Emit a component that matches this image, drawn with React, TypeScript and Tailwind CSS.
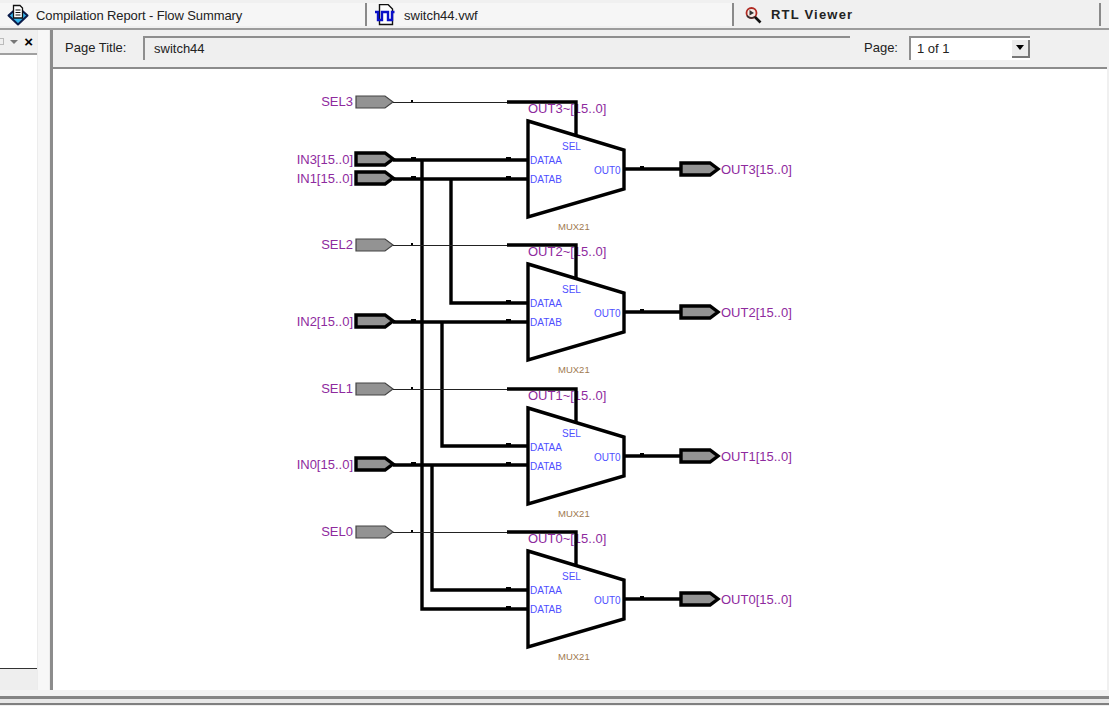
const muxOffsets = [
  { dy: 0, sel: 'SEL3', selLabel: 'OUT3~[15..0]', out: 'OUT3[15..0]' },
  { dy: 143, sel: 'SEL2', selLabel: 'OUT2~[15..0]', out: 'OUT2[15..0]' },
  { dy: 287, sel: 'SEL1', selLabel: 'OUT1~[15..0]', out: 'OUT1[15..0]' },
  { dy: 430, sel: 'SEL0', selLabel: 'OUT0~[15..0]', out: 'OUT0[15..0]' },
]

const busInputs = [
  { y: 160, name: 'IN3[15..0]' },
  { y: 179, name: 'IN1[15..0]' },
  { y: 322, name: 'IN2[15..0]' },
  { y: 465, name: 'IN0[15..0]' },
]

// vertical tap + the horizontal run into the mux below
const taps = [
  { x: 422, y1: 160, y2: 609 },
  { x: 451, y1: 179, y2: 303 },
  { x: 442, y1: 322, y2: 446 },
  { x: 432, y1: 465, y2: 590 },
]

const purple = '#8e2a9e'
const blue = '#4f4fff'

function Pin({ x, y, thick }: { x: number; y: number; thick?: boolean }) {
  const points = `${x},${y - 6} ${x + 29},${y - 6} ${x + 37},${y} ${x + 29},${y + 6} ${x},${y + 6}`
  return <polygon points={points} fill="#939393" stroke={thick ? '#000' : '#444'} strokeWidth={thick ? 3.4 : 1.2} />
}

function Mux({ dy, sel, selLabel, out }: (typeof muxOffsets)[number]) {
  const selY = 102 + dy
  const outY = 169 + dy
  return (
    <g>
      <text x={353} y={selY + 4} textAnchor="end" fontSize={13} fill={purple}>{sel}</text>
      <Pin x={356} y={selY} />
      <line x1={393} y1={selY + 0.5} x2={507} y2={selY + 0.5} stroke="#222" strokeWidth={1} />
      <rect x={411} y={selY - 2} width={2} height={2} fill="#000" />
      <text x={528} y={113 + dy} fontSize={13} fill={purple}>{selLabel}</text>
      <path d={`M507 ${selY}H576V${137 + dy}`} fill="none" stroke="#000" strokeWidth={3.4} />

      <polygon
        points={`528,${121 + dy} 624,${150 + dy} 624,${189 + dy} 528,${217 + dy}`}
        fill="#fff"
        stroke="#000"
        strokeWidth={3.4}
      />
      <text x={562} y={150 + dy} fontSize={10} fill={blue}>SEL</text>
      <text x={530} y={164 + dy} fontSize={10} fill={blue}>DATAA</text>
      <text x={530} y={183 + dy} fontSize={10} fill={blue}>DATAB</text>
      <text x={594} y={174 + dy} fontSize={10} fill={blue}>OUT0</text>
      <text x={558} y={230 + dy} fontSize={9.500} fill="#a07a50">MUX21</text>

      <line x1={624} y1={outY} x2={681} y2={outY} stroke="#000" strokeWidth={3.4} />
      <rect x={640} y={outY - 3} width={4} height={2} fill="#000" />
      <Pin x={681} y={outY} thick />
      <text x={721} y={outY + 5} fontSize={13} fill={purple}>{out}</text>
    </g>
  )
}

function Diagram() {
  return (
    <svg
      width={1054}
      height={622}
      viewBox="53 69 1054 622"
      className="block"
      style={{ fontFamily: '"Liberation Sans", Arial, sans-serif' }}
    >
      {busInputs.map(b => (
        <g key={b.name}>
          <line x1={393} y1={b.y} x2={528} y2={b.y} stroke="#000" strokeWidth={3.4} />
          <rect x={411} y={b.y - 3} width={5} height={2} fill="#000" />
          <rect x={506} y={b.y - 3} width={5} height={2} fill="#000" />
        </g>
      ))}
      {taps.map(t => (
        <g key={t.x}>
          <path d={`M${t.x} ${t.y1}V${t.y2}H528`} fill="none" stroke="#000" strokeWidth={3.4} />
          <rect x={506} y={t.y2 - 3} width={5} height={2} fill="#000" />
        </g>
      ))}
      {busInputs.map(b => (
        <g key={b.name}>
          <text x={353} y={b.y + 4} textAnchor="end" fontSize={13} fill={purple}>{b.name}</text>
          <Pin x={356} y={b.y - 1} thick />
        </g>
      ))}
      {muxOffsets.map(m => (
        <Mux key={m.sel} {...m} />
      ))}
    </svg>
  )
}

function ReportIcon() {
  return (
    <svg width={22} height={22} viewBox="0 0 22 22" className="shrink-0">
      <path d="M11 3L20.500 11.500L11 20.500L1.500 11.500Z" fill="#35b6ee" stroke="#0b1c4a" strokeWidth={2} strokeLinejoin="round" />
      <path d="M6.500 1.500H13L15.500 4V14H6.500Z" fill="#fff" stroke="#111" strokeWidth={1.300} />
      <path d="M8.500 6H13.500M8.500 8.500H13.500M8.500 11H13.500" stroke="#111" strokeWidth={1.200} />
    </svg>
  )
}

function WaveIcon() {
  return (
    <svg width={22} height={22} viewBox="0 0 22 22" className="shrink-0">
      <path d="M5.500 0.500H14L18.500 5V20.500H5.500Z" fill="#fff" stroke="#111" strokeWidth={1.400} />
      <path d="M1 8H4V16H8V8H14V16H18V8H20.500" fill="none" stroke="#0a10c8" strokeWidth={2.400} />
    </svg>
  )
}

function RtlIcon() {
  return (
    <svg width={18} height={18} viewBox="0 0 18 18" className="shrink-0">
      <circle cx={7.500} cy={7} r={5} fill="#f4ece8" stroke="#b02a22" strokeWidth={1.800} />
      <path d="M3 9.500A5 5 0 0 0 11 10.500" fill="none" stroke="#333" strokeWidth={1.600} />
      <path d="M5.500 4L10 7L5.500 9.500Z" fill="#333" />
      <path d="M11 11L16.500 16.500" stroke="#111" strokeWidth={2.600} />
    </svg>
  )
}

export default function App() {
  return (
    <div className="flex h-[706px] w-[1109px] flex-col overflow-hidden bg-[#f0f0f0] text-[#222] font-['Liberation_Sans',Arial,sans-serif]">
      {/* document tabs */}
      <div className="flex h-[30px] border-b-2 border-[#9c9c9c] pt-[3px] pb-[2px]">
        <div className="flex w-[367px] items-center gap-[7px] border-r-2 border-[#8a8a8a] bg-[#f6f6f6] pl-[7px]">
          <ReportIcon />
          <span className="relative top-[1px] text-[13px] tracking-[-0.1px]">Compilation Report - Flow Summary</span>
        </div>
        <div className="flex w-[367px] items-center gap-[8px] border-r-2 border-[#8a8a8a] bg-[#f6f6f6] pl-[7px]">
          <WaveIcon />
          <span className="relative top-[1px] text-[13px]">switch44.vwf</span>
        </div>
        <div className="flex w-[367px] items-center gap-[9px] border-r-2 border-[#8a8a8a] pl-[10px]">
          <RtlIcon />
          <span className="text-[13px] font-bold tracking-[1.2px]">RTL Viewer</span>
        </div>
      </div>

      <div className="flex min-h-0 flex-1">
        {/* project navigator stub */}
        <div className="flex w-[37px] flex-col">
          <div className="flex h-[23px] items-center justify-end gap-[6px] pr-1">
            <span className="h-[7px] w-[4px] border-y border-r border-[#bbb]" />
            <span className="h-0 w-0 border-x-[4px] border-t-[4px] border-x-transparent border-t-[#777]" />
            <span className="text-[15px] leading-none font-bold text-black">×</span>
          </div>
          <div className="flex-1 border-t-2 border-[#a0a0a0] bg-white" />
          <div className="h-[22px] border-t border-[#333] bg-[#eeeeee]" />
        </div>
        <div className="w-[13px] border-x border-[#ececec] bg-[#f7f7f7]" />

        <div className="flex min-w-0 flex-1 flex-col border-l-[3px] border-[#8c8c8c] pr-[2px]">
          <div className="flex h-[37px] items-center pr-[77px] pb-[2px] pl-[12px] text-[13px]">
            <span className="w-[78px]">Page Title:</span>
            <div className="flex h-[24px] w-[707px] items-center border-t-2 border-l-2 border-[#8e8e8e] bg-[#efefef] pl-[9px]">switch44</div>
            <span className="ml-[14px] w-[45px]">Page:</span>
            <div className="flex h-[24px] w-[121px] shrink-0 items-center justify-between border-t-2 border-l-2 border-[#8e8e8e] bg-white pl-[6px]">
              <span>1 of 1</span>
              <span className="flex h-[18px] w-[18px] items-center justify-center border-r-2 border-b-2 border-[#777] bg-[#ececec]">
                <span className="h-0 w-0 border-x-[4px] border-t-[5px] border-x-transparent border-t-black" />
              </span>
            </div>
          </div>
          <div className="min-h-0 flex-1 border-t-2 border-[#8c8c8c] bg-white">
            <Diagram />
          </div>
        </div>
      </div>

      {/* status strip */}
      <div className="flex h-[16px] flex-col">
        <div className="h-[6px] bg-[#f2f2f2]" />
        <div className="h-[3px] bg-[#858585]" />
        <div className="h-[4px] bg-[#e8e8e8]" />
        <div className="h-[2px] bg-[#808080]" />
        <div className="h-[1px] bg-[#efefef]" />
      </div>
    </div>
  )
}
